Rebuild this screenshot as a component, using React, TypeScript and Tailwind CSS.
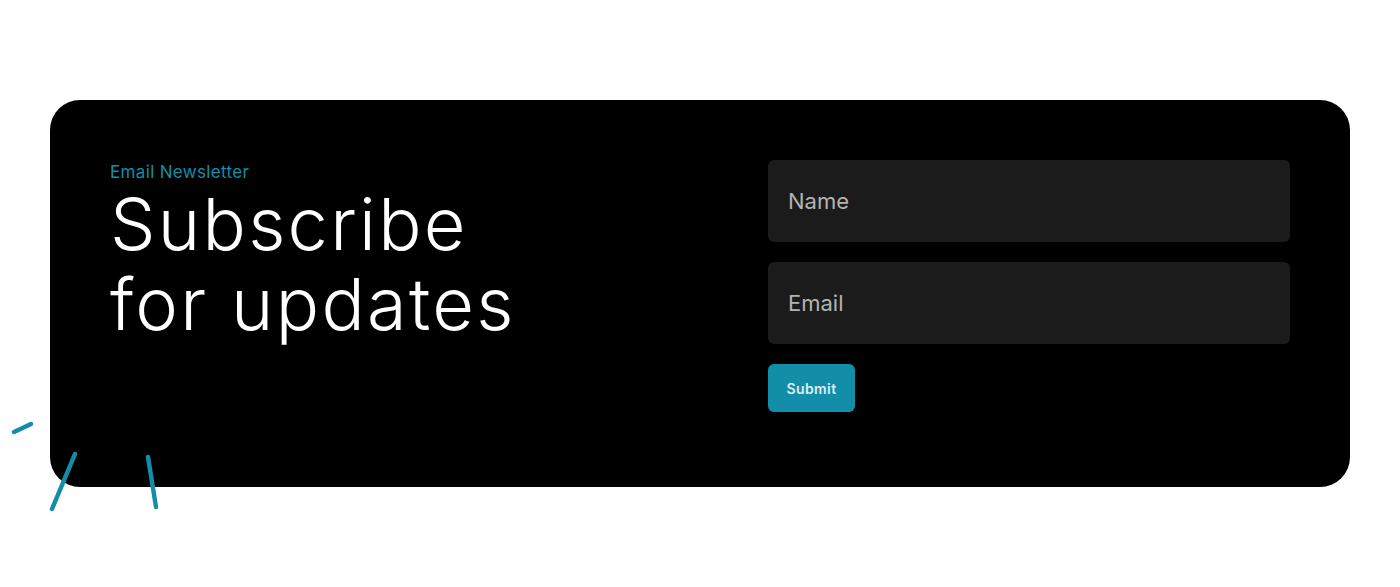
const Strokes = () => (
  <svg className="absolute left-0 top-0 pointer-events-none" width="200" height="520" viewBox="0 0 200 520">
    <g stroke="#128ea8" strokeWidth="4.5" strokeLinecap="round" fill="none">
      <line x1="14" y1="432" x2="31" y2="424" />
      <line x1="75" y1="454" x2="52" y2="509" />
      <line x1="148" y1="457" x2="156" y2="507" />
    </g>
  </svg>
);

export default function App() {
  return (
    <div className="relative w-[1400px] h-[587px] bg-white font-['Inter',sans-serif] pt-[100px] px-[50px]">
      <div className="bg-black rounded-[30px] h-[387px] px-[60px] py-[60px] grid grid-cols-[1fr_522px] gap-[60px]">
        <div>
          <p className="text-[17px] leading-[24px] tracking-[0.02em] text-[#138ea8]">Email Newsletter</p>
          <h1 className="text-[72px] leading-[80px] font-light text-white tracking-[0.032em]">
            Subscribe
            <br />
            for updates
          </h1>
        </div>

        <form className="flex flex-col gap-5" onSubmit={(e) => e.preventDefault()}>
          <input
            type="text"
            placeholder="Name"
            className="h-[82px] w-full rounded-md bg-[#1b1b1b] px-5 text-[22px] text-white placeholder-[#b3b3b3] outline-none"
          />
          <input
            type="email"
            placeholder="Email"
            className="h-[82px] w-full rounded-md bg-[#1b1b1b] px-5 text-[22px] text-white placeholder-[#b3b3b3] outline-none"
          />
          <div>
            <button
              type="submit"
              className="h-12 w-[87px] rounded-md bg-[#128ea8] text-[14px] tracking-[0.03em] font-semibold text-[#dfeff3]"
            >
              Submit
            </button>
          </div>
        </form>
      </div>
      <Strokes />
    </div>
  );
}
